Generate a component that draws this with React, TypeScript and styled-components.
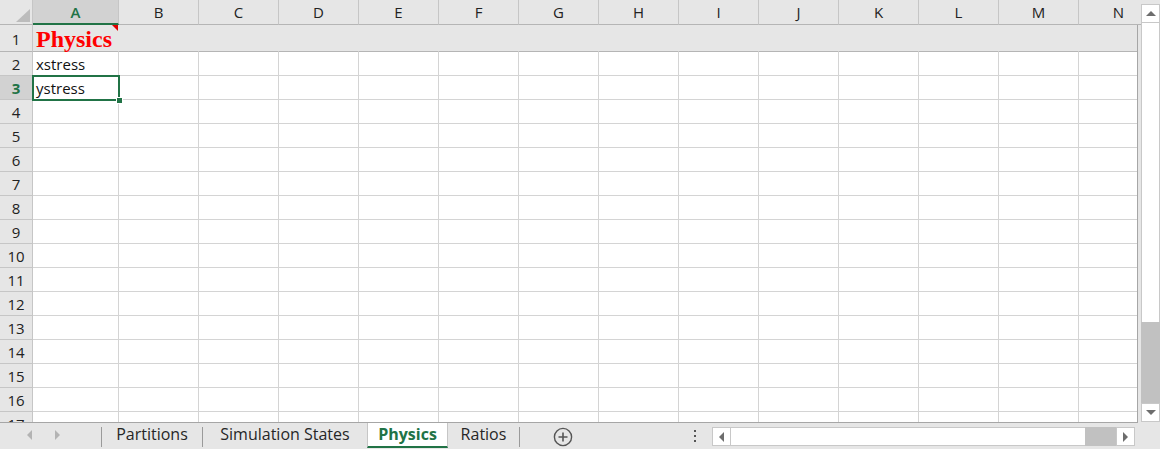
import React from "react";
import styled, { createGlobalStyle, css } from "styled-components";

const GREEN = "#217346";
const HEADER_BG = "#e6e6e6";
const HEADER_SEL = "#d2d2d2";
const GRID = "#d4d4d4";
const HEADER_LINE = "#c6c6c6";
const FRAME = "#a6a6a6";

const GlobalStyle = createGlobalStyle`
  html, body { margin: 0; padding: 0; }
  body { background: ${HEADER_BG}; overflow: hidden; }
  * { box-sizing: border-box; }
`;

const Window = styled.div`
  width: 1160px;
  height: 449px;
  display: flex;
  flex-direction: column;
  background: ${HEADER_BG};
  overflow: hidden;
  font-family: "Open Sans", "Liberation Sans", sans-serif;
  color: #222;
`;

const Main = styled.div`
  display: flex;
  height: 423px;
  flex-shrink: 0;
`;

const Sheet = styled.div`
  width: 1141px;
  display: flex;
  flex-direction: column;
  overflow: hidden;
`;

const COLS = "33px 86px repeat(13, 80px)";

const HeaderRow = styled.div`
  display: grid;
  grid-template-columns: ${COLS};
  height: 25px;
  flex-shrink: 0;
`;

const Corner = styled.div`
  display: flex;
  align-items: flex-end;
  justify-content: flex-end;
  padding: 0 2px 2px 0;
  background: ${HEADER_BG};
  border-right: 1px solid ${HEADER_LINE};
  border-bottom: 1px solid #b5b5b5;
`;

const ColHeader = styled.div<{ $sel?: boolean }>`
  display: flex;
  align-items: center;
  justify-content: center;
  font-size: 15px;
  background: ${HEADER_BG};
  border-right: 1px solid ${HEADER_LINE};
  border-bottom: 1px solid #b5b5b5;
  color: #222;
  ${(p) =>
    p.$sel &&
    css`
      background: ${HEADER_SEL};
      color: ${GREEN};
      font-weight: 600;
      border-bottom: 2px solid ${GREEN};
    `}
`;

const Body = styled.div`
  position: relative;
  width: 1138px;
  height: 398px;
  flex-shrink: 0;
  overflow: hidden;
  background: #fff;
  border-right: 1px solid ${FRAME};
  border-bottom: 1px solid ${FRAME};
`;

const Row = styled.div<{ $h: number }>`
  display: grid;
  grid-template-columns: ${COLS};
  height: ${(p) => p.$h}px;
  flex-shrink: 0;
`;

const RowHeader = styled.div<{ $sel?: boolean; $strong?: boolean }>`
  display: flex;
  align-items: center;
  justify-content: center;
  font-size: 15px;
  padding-top: 1px;
  background: ${HEADER_BG};
  border-right: 1px solid ${HEADER_LINE};
  border-bottom: 1px solid ${(p) => (p.$strong ? "#b5b5b5" : HEADER_LINE)};
  color: #222;
  ${(p) =>
    p.$sel &&
    css`
      background: ${HEADER_SEL};
      color: ${GREEN};
      font-weight: 700;
    `}
`;

const Cell = styled.div<{ $fill?: boolean; $strong?: boolean }>`
  position: relative;
  display: flex;
  align-items: center;
  padding: 1px 0 0 3px;
  font-size: 15px;
  white-space: nowrap;
  overflow: visible;
  color: #111;
  background: ${(p) => (p.$fill ? HEADER_BG : "#fff")};
  border-right: 1px solid ${(p) => (p.$fill ? HEADER_BG : GRID)};
  border-bottom: 1px solid ${(p) => (p.$strong ? "#b5b5b5" : GRID)};
`;

const Title = styled.span`
  font-family: "Liberation Serif", "Times New Roman", serif;
  font-weight: 700;
  font-size: 24px;
  color: #ff0000;
  line-height: 1;
  padding-top: 1px;
`;

const CommentMark = styled.span`
  position: absolute;
  top: 0;
  right: 0;
  width: 0;
  height: 0;
  border-top: 6px solid #e00000;
  border-left: 6px solid transparent;
`;

const Selection = styled.div`
  position: absolute;
  left: 32px;
  top: 50px;
  width: 88px;
  height: 26px;
  border: 2px solid ${GREEN};
  pointer-events: none;
`;

const FillHandle = styled.span`
  position: absolute;
  right: -5px;
  bottom: -5px;
  width: 7px;
  height: 7px;
  background: ${GREEN};
  border: 1px solid #fff;
`;

/* Vertical scrollbar */
const VScroll = styled.div`
  width: 19px;
  display: flex;
  flex-direction: column;
  padding: 4px 0 1px 0;
`;

const ScrollButton = styled.div`
  width: 19px;
  height: 19px;
  flex-shrink: 0;
  display: flex;
  align-items: center;
  justify-content: center;
  background: #fff;
  border: 1px solid #c8c8c8;
`;

const VThumb = styled.div<{ $len: number }>`
  height: ${(p) => p.$len}px;
  flex-shrink: 0;
  background: #fff;
  border-left: 1px solid #c8c8c8;
  border-right: 1px solid #c8c8c8;
`;

const Track = styled.div`
  flex: 1;
  background: #c1c1c1;
`;

/* Tab bar */
const TabBar = styled.div`
  display: flex;
  align-items: flex-start;
  height: 26px;
  background: ${HEADER_BG};
  font-family: "Open Sans", "Liberation Sans", sans-serif;
  font-size: 16px;
  color: #262626;
`;

const NavArea = styled.div`
  width: 101px;
  height: 25px;
  display: flex;
  align-items: center;
  padding: 0 0 1px 27px;
  gap: 23px;
`;

const Separator = styled.div`
  width: 1px;
  height: 20px;
  margin-top: 4px;
  background: #9a9a9a;
  flex-shrink: 0;
`;

const Tab = styled.div<{ $w: number; $active?: boolean }>`
  width: ${(p) => p.$w}px;
  height: 25px;
  flex-shrink: 0;
  display: flex;
  align-items: center;
  justify-content: center;
  white-space: nowrap;
  padding-bottom: 4px;
  ${(p) =>
    p.$active &&
    css`
      background: #fff;
      color: ${GREEN};
      font-weight: 700;
      border-left: 1px solid #c6c6c6;
      border-right: 1px solid #c6c6c6;
      border-bottom: 2px solid ${GREEN};
      padding-bottom: 2px;
    `}
`;

const AddSheet = styled.div`
  width: 20px;
  height: 20px;
  margin: 4px 0 0 33px;
  display: flex;
  flex-shrink: 0;
`;

const MoreDots = styled.div`
  width: 4px;
  height: 25px;
  margin-left: 120px;
  display: flex;
  flex-direction: column;
  align-items: center;
  justify-content: center;
  gap: 3px;
  padding-top: 1px;
  span {
    width: 2px;
    height: 2px;
    background: #555;
  }
`;

const HScroll = styled.div`
  width: 423px;
  height: 19px;
  margin: 4px 0 0 15px;
  display: flex;
`;

const HThumb = styled.div<{ $len: number }>`
  width: ${(p) => p.$len}px;
  flex-shrink: 0;
  background: #fff;
  border-top: 1px solid #c8c8c8;
  border-bottom: 1px solid #c8c8c8;
`;

const Arrow = ({ dir, color = "#6d6d6d" }: { dir: "up" | "down" | "left" | "right"; color?: string }) => {
  const pts = {
    up: "0,5 10,5 5,0",
    down: "0,0 10,0 5,5",
    left: "5,0 5,10 0,5",
    right: "0,0 0,10 5,5",
  }[dir];
  const vertical = dir === "up" || dir === "down";
  return (
    <svg width={vertical ? 10 : 5} height={vertical ? 5 : 10} viewBox={vertical ? "0 0 10 5" : "0 0 5 10"}>
      <polygon points={pts} fill={color} />
    </svg>
  );
};

const COLUMNS = ["A", "B", "C", "D", "E", "F", "G", "H", "I", "J", "K", "L", "M", "N"];

export default function App() {
  const rows = Array.from({ length: 17 }, (_, i) => i + 1);
  const cellText: Record<number, string> = { 2: "xstress", 3: "ystress" };

  return (
    <>
      <GlobalStyle />
      <Window>
        <Main>
          <Sheet>
            <HeaderRow>
              <Corner>
                <svg width="14" height="13" viewBox="0 0 14 13">
                  <polygon points="14,0 14,13 0,13" fill="#bcbcbc" />
                </svg>
              </Corner>
              {COLUMNS.map((c) => (
                <ColHeader key={c} $sel={c === "A"}>
                  {c}
                </ColHeader>
              ))}
            </HeaderRow>
            <Body>
              {rows.map((r) => (
                <Row key={r} $h={r === 1 ? 27 : 24}>
                  <RowHeader $sel={r === 3} $strong={r === 1}>
                    {r}
                  </RowHeader>
                  {COLUMNS.map((c) => (
                    <Cell key={c} $fill={r === 1} $strong={r === 1}>
                      {r === 1 && c === "A" && (
                        <>
                          <Title>Physics</Title>
                          <CommentMark />
                        </>
                      )}
                      {c === "A" && cellText[r]}
                    </Cell>
                  ))}
                </Row>
              ))}
              <Selection>
                <FillHandle />
              </Selection>
            </Body>
          </Sheet>
          <VScroll>
            <ScrollButton>
              <Arrow dir="up" />
            </ScrollButton>
            <VThumb $len={299} />
            <Track />
            <ScrollButton>
              <Arrow dir="down" />
            </ScrollButton>
          </VScroll>
        </Main>
        <TabBar>
          <NavArea>
            <Arrow dir="left" color="#b3b3b3" />
            <Arrow dir="right" color="#b3b3b3" />
          </NavArea>
          <Separator />
          <Tab $w={100}>Partitions</Tab>
          <Separator />
          <Tab $w={164}>Simulation States</Tab>
          <Tab $w={81} $active>
            Physics
          </Tab>
          <Tab $w={71}>Ratios</Tab>
          <Separator />
          <AddSheet>
            <svg width="20" height="20" viewBox="0 0 20 20">
              <circle cx="10" cy="10" r="8.6" fill="none" stroke="#555" strokeWidth="1.4" />
              <path d="M10 5.5v9M5.5 10h9" stroke="#555" strokeWidth="1.6" />
            </svg>
          </AddSheet>
          <MoreDots>
            <span />
            <span />
            <span />
          </MoreDots>
          <HScroll>
            <ScrollButton>
              <Arrow dir="left" />
            </ScrollButton>
            <HThumb $len={354} />
            <Track />
            <ScrollButton>
              <Arrow dir="right" />
            </ScrollButton>
          </HScroll>
        </TabBar>
      </Window>
    </>
  );
}
